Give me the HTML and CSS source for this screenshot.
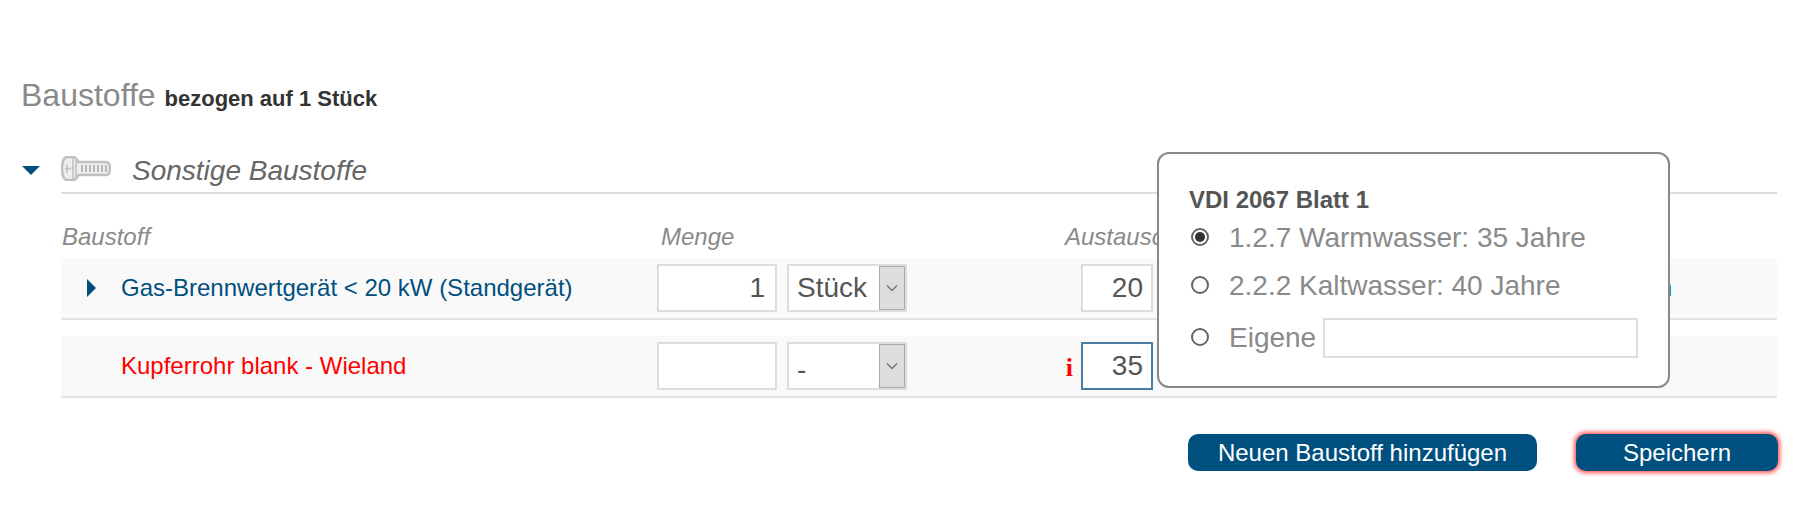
FILE: index.html
```html
<!DOCTYPE html>
<html lang="de">
<head>
  <meta charset="UTF-8">
  <title>Baustoffe</title>
  <meta name="viewport" content="width=device-width, initial-scale=1.0">
  <link rel="stylesheet" href="styles.css">
</head>
<body>
  <div class="page">
    <h1 class="title">Baustoffe <span class="title-sub">bezogen auf 1 Stück</span></h1>

    <div class="group">
      <span class="arrow-down"></span>
      <div class="group-head">
        <svg class="screw" width="50" height="25" viewBox="0 0 50 25">
          <path d="M6 1h6c3 0 4 2 5 5h28c3 0 4 3 4 6.500s-1 6.500-4 6.500H17c-1 3-2 5-5 5H6c-3 0-5-5-5-11.500S3 1 6 1z" fill="#eee" stroke="#c0c0c0" stroke-width="2.500"/>
          <path d="M12 2v21M15 4v17M4 12.500h6M6 8v9" fill="none" stroke="#c0c0c0" stroke-width="1.500"/>
          <path d="M21 9v7M25 9v7M29 9v7M33 9v7M37 9v7M41 9v7M45 9v7" stroke="#b8b8b8" stroke-width="2"/>
        </svg>
        <span class="group-name">Sonstige Baustoffe</span>
      </div>
    </div>

    <div class="table">
      <div class="head">
        <span class="col-name">Baustoff</span>
        <span class="col-menge">Menge</span>
        <span class="col-life">Austausch</span>
      </div>

      <div class="row">
        <span class="arrow-right"></span>
        <span class="col-name link has-arrow">Gas-Brennwertgerät &lt; 20 kW (Standgerät)</span>
        <span class="col-menge fields">
          <input class="num qty" value="1">
          <span class="select"><span class="select-val">Stück</span><span class="select-btn"><svg width="12" height="8" viewBox="0 0 12 8"><path d="M1 1.500 6 6.500l5-5" fill="none" stroke="#777" stroke-width="1.500"/></svg></span></span>
        </span>
        <span class="col-life fields"><input class="num life" value="20"></span>
        <span class="row-end link">n</span>
      </div>

      <div class="row">
        <span class="col-name error">Kupferrohr blank - Wieland</span>
        <span class="col-menge fields">
          <input class="num qty" value="">
          <span class="select"><span class="select-val select-empty">-</span><span class="select-btn"><svg width="12" height="8" viewBox="0 0 12 8"><path d="M1 1.500 6 6.500l5-5" fill="none" stroke="#777" stroke-width="1.500"/></svg></span></span>
        </span>
        <span class="col-life fields"><span class="info">i</span><input class="num life focus" value="35"></span>
      </div>
    </div>

    <div class="actions">
      <button class="btn btn-add">Neuen Baustoff hinzufügen</button>
      <button class="btn btn-save">Speichern</button>
    </div>
  </div>

  <div class="popup">
    <h3>VDI 2067 Blatt 1</h3>
    <label class="opt"><input type="radio" name="vdi" checked><span>1.2.7 Warmwasser: 35 Jahre</span></label>
    <label class="opt"><input type="radio" name="vdi"><span>2.2.2 Kaltwasser: 40 Jahre</span></label>
    <label class="opt opt-own"><input type="radio" name="vdi"><span class="own-label">Eigene</span><input class="own" type="text"></label>
  </div>
</body>
</html>
```

FILE: styles.css
```css
* { box-sizing: border-box; margin: 0; padding: 0; }
body {
  font-family: 'Liberation Sans', Arial, sans-serif;
  background: #fff;
  color: #555;
  height: 514px;
  overflow: hidden;
  position: relative;
}
.page {
  padding: 76px 19px 0 21px;
}
.title {
  font-size: 32px;
  font-weight: normal;
  color: #8a8a8a;
  line-height: 38px;
}
.title-sub {
  font-size: 22px;
  font-weight: bold;
  color: #333;
}
.group {
  display: flex;
  align-items: center;
  margin-top: 32px;
}
.arrow-down {
  flex: none;
  width: 0;
  height: 0;
  margin: 0 21px 4px 1px;
  border-left: 9px solid transparent;
  border-right: 9px solid transparent;
  border-top: 9px solid #00507f;
}
.group-head {
  flex: 1;
  display: flex;
  align-items: center;
  height: 44px;
  border-bottom: 2px solid #ddd;
}
.screw {
  margin: 0 21px 5px 0;
  filter: blur(0.7px);
}
.group-name {
  font-size: 28px;
  font-style: italic;
  color: #666;
}
.table {
  margin-left: 40px;
}
.head {
  display: flex;
  height: 64px;
  align-items: center;
  padding-top: 22px;
  font-size: 24px;
  font-style: italic;
  color: #8a8a8a;
}
.col-name { width: 596px; flex: none; }
.col-menge { width: 408px; flex: none; }
.col-life { width: 88px; flex: none; }
.head .col-name { padding-left: 1px; }
.head .col-menge { padding-left: 4px; }
.head .col-life { white-space: nowrap; }
.row {
  display: flex;
  align-items: center;
  height: 62px;
  margin-bottom: 16px;
  background: #f9f9f9;
  border-bottom: 2px solid #e2e2e2;
  font-size: 24px;
}
.row .col-name { padding-left: 60px; }
.row .has-arrow {
  width: 561px;
  padding-left: 25px;
}
.link { color: #00507f; }
.error { color: #f00; }
.arrow-right {
  flex: none;
  width: 0;
  height: 0;
  margin-left: 26px;
  border-top: 9px solid transparent;
  border-bottom: 9px solid transparent;
  border-left: 9px solid #00507f;
}
.fields {
  display: flex;
  align-items: center;
}
.col-life.fields { justify-content: flex-end; }
.num {
  height: 48px;
  border: 2px solid #ddd;
  background: #fff;
  font: 28px 'Liberation Sans', Arial, sans-serif;
  color: #555;
  text-align: right;
  padding-right: 8px;
  outline: none;
}
.qty { width: 120px; padding-right: 10px; }
.life { width: 72px; }
.focus { border-color: #4a7fa5; }
.select {
  display: flex;
  width: 120px;
  height: 48px;
  margin-left: 10px;
  border: 2px solid #ddd;
  background: #fff;
  font-size: 28px;
}
.select-val {
  flex: 1;
  padding-left: 8px;
  line-height: 44px;
}
.select-empty { padding-top: 4px; }
.select-btn {
  width: 26px;
  background: #ddd;
  border: 1px solid #aaa;
  display: flex;
  align-items: center;
  justify-content: center;
}
.info {
  margin: 4px 8px 0 0;
  font: bold 26px 'Liberation Serif', serif;
  color: #f00;
}
.row-end {
  margin-left: auto;
  padding-right: 105px;
}
.actions {
  display: flex;
  justify-content: flex-end;
  gap: 39px;
  margin-right: -1px;
  padding-top: 20px;
}
.btn {
  height: 37px;
  border: none;
  border-radius: 10px;
  background: #00507f;
  color: #fff;
  font: 24px 'Liberation Sans', Arial, sans-serif;
}
.btn-add { width: 349px; }
.btn-save {
  width: 202px;
  box-shadow: 0 0 4px 2px #f55;
}
.popup {
  position: absolute;
  left: 1157px;
  top: 152px;
  width: 513px;
  height: 236px;
  padding: 31px 30px 0;
  background: #fff;
  border: 2px solid #888;
  border-radius: 12px;
}
.popup h3 {
  font-size: 24px;
  line-height: 29px;
  color: #555;
}
.opt {
  display: flex;
  align-items: center;
  height: 48px;
  font-size: 28px;
  color: #8a8a8a;
}
.opt input[type=radio] {
  appearance: none;
  flex: none;
  position: relative;
  width: 18px;
  height: 18px;
  margin: 0 20px 2px 2px;
  background: #fff;
  border: 2px solid #666;
  border-radius: 50%;
}
.opt input[type=radio]:checked::after {
  content: "";
  position: absolute;
  left: 2px;
  top: 2px;
  width: 10px;
  height: 10px;
  background: #333;
  border-radius: 50%;
}
.opt-own { margin-top: 4px; }
.opt-own input[type=radio] { margin-right: 20px; }
.own-label { margin-right: 7px; }
.own {
  width: 315px;
  height: 40px;
  border: 2px solid #ddd;
  background: #fff;
  outline: none;
}
```
